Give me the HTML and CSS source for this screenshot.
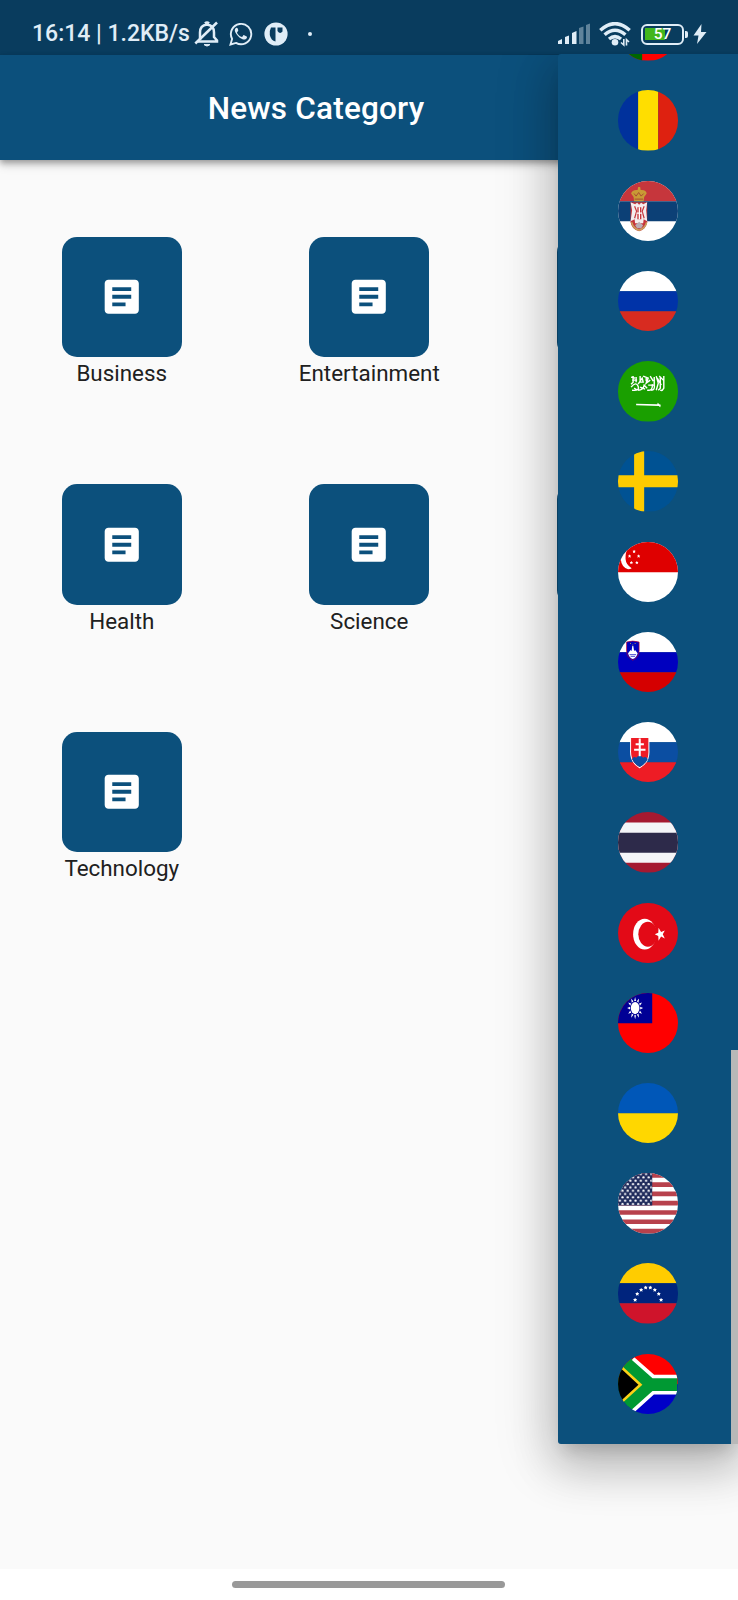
FILE: index.html
```html
<!DOCTYPE html>
<html lang="en">
<head>
<meta charset="utf-8">
<title>News Category</title>
<link rel="stylesheet" href="styles.css">
</head>
<body>
<svg class="defs" aria-hidden="true">
  <symbol id="article" viewBox="0 0 24 24"><path fill="#fff" d="M19 3H5c-1.100 0-2 .9-2 2v14c0 1.100.9 2 2 2h14c1.100 0 2-.9 2-2V5c0-1.100-.9-2-2-2zm-5 14H7v-2h7v2zm3-4H7v-2h10v2zm0-4H7V7h10v2z"/></symbol>
  <symbol id="star" viewBox="-10 -10 20 20"><path d="M0-10 3-4H9.500L5 1.500 6.500 9 0 5-6.500 9-5 1.500-9.500-4H-3Z"/></symbol>
  <pattern id="us-stars" width="5.200" height="6.600" patternUnits="userSpaceOnUse" x="0.600" y="-0.500">
    <circle cx="1.300" cy="1.600" r="1.100" fill="#fff"/><circle cx="3.900" cy="4.900" r="1.100" fill="#fff"/>
  </pattern>
</svg>

<div class="screen">
  <header class="status">
    <span class="clock">16:14 | 1.2KB/s</span>
    <svg class="bell" viewBox="0 0 26 28" fill="none" stroke="currentColor" stroke-width="2.500">
      <path d="M6 20V12.500C6 8 8.500 5 13 4.500 17.500 5 20 8 20 12.500V17L23 20.500V21.500H4"/><path d="M11 3.500Q13 1.600 15 3.500"/><path d="M1.300 23.500 23 2.500"/><path d="M10 24.600Q13 27.600 16 24.600Z" fill="currentColor" stroke-width="1"/>
    </svg>
    <svg class="whatsapp" viewBox="0 0 24 24">
      <path fill="none" stroke="currentColor" stroke-width="1.900" d="M1.500 22.500 3.100 16.900A10.200 10.200 0 1 1 7 20.900Z"/>
      <path fill="currentColor" d="M8.600 6.300c-.4-.7-.8-.7-1.200-.6-1 .4-1.700 1.500-1.600 2.900.3 2.700 4 7.300 7.700 8.700 2.200.8 4-.2 4.400-1.500.2-.8.1-1.200-.2-1.400l-2.500-1.200c-.4-.2-.7-.1-1 .3l-.9 1.200c-.3.300-.6.300-1 .1-1.900-.8-3.300-2.200-4.200-3.900-.2-.4 0-.6.200-.9l.8-1c.2-.3.2-.6.100-.9z"/>
    </svg>
    <svg class="badge" viewBox="0 0 24 24">
      <circle cx="12" cy="12" r="11.600" fill="currentColor"/>
      <path fill="#093c5e" d="M7 5.500H11.500V19.500Q7 18.500 5.800 13 5.500 8 7 5.500ZM13.500 5.500H18.500V9.500Q16 12.500 13.500 9Z"/>
    </svg>
    <span class="dot"></span>
    <svg class="signal" viewBox="0 0 32 22" fill="currentColor">
      <path d="M0 21V18L4 16V21ZM7 21V14L11 12.500V21ZM14 21V10L18.500 8V21Z"/>
      <path opacity=".4" d="M21 21V5L25.500 3.500V21ZM28 21V2L32 .5V21Z"/>
    </svg>
    <svg class="wifi" viewBox="0 0 32 25">
      <g fill="none" stroke="currentColor" stroke-width="3.500"><path d="M1.300 8.300Q16-5 30.700 8.300"/><path d="M5.600 12.800Q16 3.700 26.400 12.800"/><path d="M10 17Q16 12.200 22 17"/></g>
      <circle cx="16" cy="20.300" r="3.300" fill="currentColor"/>
      <path fill="none" stroke="currentColor" stroke-width="1.600" d="M22 20.500 24.800 23V17M30 20 27.500 17.600V23.500"/>
    </svg>
    <span class="battery"><span class="charge">57</span></span><span class="cap"></span>
    <svg class="bolt" viewBox="0 0 14 20"><path fill="currentColor" d="M8.500 0 .5 11.500H5.500L4 20 13.500 8H8Z"/></svg>
  </header>
  <div class="appbar"><h1>News Category</h1></div>
  <main class="grid">
    <div class="item"><div class="tile"><svg><use href="#article"/></svg></div><span>Business</span></div>
    <div class="item"><div class="tile"><svg><use href="#article"/></svg></div><span>Entertainment</span></div>
    <div class="item"><div class="tile"></div></div>
    <div class="item"><div class="tile"><svg><use href="#article"/></svg></div><span>Health</span></div>
    <div class="item"><div class="tile"><svg><use href="#article"/></svg></div><span>Science</span></div>
    <div class="item"><div class="tile"></div></div>
    <div class="item"><div class="tile"><svg><use href="#article"/></svg></div><span>Technology</span></div>
  </main>
  <footer class="nav"><span class="handle"></span></footer>

  <div class="drawer-clip">
  <aside class="drawer">
    <svg class="flag" viewBox="0 0 60 60"><path fill="#f00" d="M0 0H60V60H0Z"/><path fill="#060" d="M0 0H24V60H0Z"/></svg>
    <svg class="flag" viewBox="0 0 60 60"><path fill="#00319c" d="M0 0H20V60H0Z"/><path fill="#ffde00" d="M20 0H40V60H20Z"/><path fill="#de2110" d="M40 0H60V60H40Z"/></svg>
    <svg class="flag" viewBox="0 0 60 60">
      <path fill="#fff" d="M0 0H60V60H0Z"/><path fill="#c6363c" d="M0 0H60V20H0Z"/><path fill="#0c4076" d="M0 20H60V40H0Z"/>
      <path fill="#c99a35" d="M16 20 15.500 16 13 12.500Q14 8.500 19.500 9L20 6H22L22.500 9Q28 8.500 28.500 12.500L26 16 25.500 20Z"/>
      <path fill="none" stroke="#a13b31" stroke-width=".8" d="M16 12.500 18 15 20.500 11.500 23 15 25.500 12.500M16.500 18H25"/>
      <path fill="#c6363c" d="M12.500 21H29V41Q28 48 21 50 13.500 48 12.500 41Z"/>
      <path fill="#f4eeee" d="M12.500 21 17 23 19 21.500 21 23.500 23 21.500 25 23 29 21 28 29 29 40 25.500 38 25 42H17L16.500 38 12.500 40 14 29Z"/>
      <path stroke="#c6363c" stroke-width="1.200" fill="none" d="M16.500 25 18.500 30 16.500 37M26 25 24 30 26 37"/><path stroke="#c6363c" stroke-width="4" d="M21.200 26V38"/><path stroke="#fff" stroke-width="1.300" d="M21.200 26V38M18.500 32H24"/>
      <path fill="none" stroke="#c9a15c" stroke-width="1.500" d="M13.500 41Q15 47 21 49 27 47 28.500 41"/><path fill="#b9adb5" d="M17 44 21 40.500 25 44 23 47H19Z"/>
    </svg>
    <svg class="flag" viewBox="0 0 60 60"><path fill="#fff" d="M0 0H60V20H0Z"/><path fill="#0033a8" d="M0 20H60V40H0Z"/><path fill="#d82b20" d="M0 40H60V60H0Z"/></svg>
    <svg class="flag" viewBox="0 0 60 60"><path fill="#1a9f00" d="M0 0H60V60H0Z"/>
      <g fill="none" stroke="#fff" stroke-width="1.400"><path d="M13 16 17 17M15 15V21L13 23M13 26Q18 20 20 25T14 29M18 16V21M20 23 24 17 25 21 21 21M20 29Q25 29 26 24L29 27M22 26 27 28M25 15 30 17 28 22 32 19M29 29Q35 30 34 23M32 15 35 20M36 16V24Q37 29 33 29M38 15 40 22 38 29M42 16V27L40 29M45.500 15V27Q44 30 42 29M14 19 19 19M30 24H36M39 17 43 24M41 15 45 19M22 15V20M16 27 19 29M28 16V20"/></g>
      <path fill="#fff" d="M18 42.400 39 43 39.500 41.500 41 43 42.500 43.500 42 46 40.500 44.700 18 43.900Z"/></svg>
    <svg class="flag" viewBox="0 0 60 60"><path fill="#005293" d="M0 0H60V60H0Z"/><path fill="#fecb00" d="M16 0H26V60H16ZM0 24H60V36H0Z"/></svg>
    <svg class="flag" viewBox="0 0 60 60"><path fill="#fff" d="M0 0H60V60H0Z"/><path fill="#df0000" d="M0 0H60V30H0Z"/>
      <path fill="#fff" d="M9 8.200Q2.600 11 2.800 17.300 3.500 25 10 27 12.500 27 13.600 26 8 23 7.500 17 7.300 11 9 8.200Z"/>
      <g fill="#fff"><use href="#star" x="14.250" y="7.500" width="3.500" height="4"/><use href="#star" x="9.750" y="12" width="3.500" height="4"/><use href="#star" x="18.750" y="12" width="3.500" height="4"/><use href="#star" x="11.500" y="18.500" width="3.500" height="4"/><use href="#star" x="17" y="18.500" width="3.500" height="4"/></g></svg>
    <svg class="flag" viewBox="0 0 60 60"><path fill="#fff" d="M0 0H60V20H0Z"/><path fill="#0000bf" d="M0 20H60V40H0Z"/><path fill="#d50000" d="M0 40H60V60H0Z"/>
      <path fill="#0000bf" stroke="#d00020" stroke-width=".6" d="M8.500 10Q14.700 8 21 10V19Q20.500 25.500 14.700 28 9 25.500 8.500 19Z"/>
      <path fill="#fff" d="M10 21 12.500 18 13.500 19 14.200 14H15.200L16 19 17 18 19.500 21Q18.500 25.500 14.700 26.800 11 25.500 10 21Z"/><path fill="none" stroke="#0000bf" stroke-width=".7" d="M11.500 22.500H18M12.500 24.200H17"/>
      <g fill="#d9bc38"><circle cx="12.500" cy="11.500" r=".5"/><circle cx="17" cy="11.500" r=".5"/><circle cx="14.700" cy="13" r=".5"/></g></svg>
    <svg class="flag" viewBox="0 0 60 60"><path fill="#fff" d="M0 0H60V20H0Z"/><path fill="#0b4ea2" d="M0 20H60V40H0Z"/><path fill="#ee1c25" d="M0 40H60V60H0Z"/>
      <path fill="#ee1c25" stroke="#fff" stroke-width="1" d="M12.500 15.300H30.700V28Q31.500 40 21.500 45.500 11.800 40 12.500 28Z"/>
      <path fill="#0b4ea2" d="M14 37Q15.500 33.500 18 35.500 21.500 31.500 25 35.500 27.500 33.500 29.500 37 27 42 21.500 44.800 16.500 42 14 37Z"/>
      <path stroke="#fff" stroke-width="2" fill="none" d="M21.600 16.500V34M17.500 22H25.700M16 27.500H27.300"/></svg>
    <svg class="flag" viewBox="0 0 60 60"><path fill="#a51931" d="M0 0H60V60H0Z"/><path fill="#f4f5f8" d="M0 10.500H60V50.500H0Z"/><path fill="#2d2a4a" d="M0 20.500H60V40.500H0Z"/></svg>
    <svg class="flag" viewBox="0 0 60 60"><path fill="#e30a17" d="M0 0H60V60H0Z"/><ellipse cx="26.500" cy="31" rx="11.500" ry="15.300" fill="#fff"/><ellipse cx="29.700" cy="31" rx="9.500" ry="12.400" fill="#e30a17"/>
      <path fill="#fff" d="M36.500 31 40 29.500 40.300 24.500 42.800 28.800 46.500 27.200 44.500 31 46.500 35.200 42.800 33.300 40.300 37.500 40 32.700Z"/></svg>
    <svg class="flag" viewBox="0 0 60 60"><path fill="#f00" d="M0 0H60V60H0Z"/><path fill="#000095" d="M0 0H34V30H0Z"/>
      <g transform="translate(17 15) scale(.72 1)" fill="#fff"><g id="rays"><path d="M-1.300-7 0-11 1.300-7ZM-1.300 7 0 11 1.300 7ZM-7-1.300-11 0-7 1.300ZM7-1.300 11 0 7 1.300Z"/></g><use href="#rays" transform="rotate(30)"/><use href="#rays" transform="rotate(60)"/><circle r="6"/></g></svg>
    <svg class="flag" viewBox="0 0 60 60"><path fill="#0057b8" d="M0 0H60V30H0Z"/><path fill="#ffd700" d="M0 30H60V60H0Z"/></svg>
    <svg class="flag" viewBox="0 0 60 60"><path fill="#fff" d="M0 0H60V60H0Z"/><path stroke="#b7414c" stroke-width="4.620" d="M0 2.310H60M0 11.540H60M0 20.770H60M0 30H60M0 39.230H60M0 48.460H60M0 57.690H60"/><path fill="#202c5c" d="M0 0H34V32.300H0Z"/><path fill="url(#us-stars)" d="M0 0H33.500V31.800H0Z"/></svg>
    <svg class="flag" viewBox="0 0 60 60"><path fill="#fc0" d="M0 0H60V20H0Z"/><path fill="#00247d" d="M0 20H60V40H0Z"/><path fill="#cf142b" d="M0 40H60V60H0Z"/>
      <g fill="#fff"><use href="#star" x="14.900" y="34.500" width="4.200" height="4.400"/><use href="#star" x="17" y="28.500" width="4.200" height="4.400"/><use href="#star" x="20.900" y="24.500" width="4.200" height="4.400"/><use href="#star" x="25.400" y="22.300" width="4.200" height="4.400"/><use href="#star" x="30" y="22.300" width="4.200" height="4.400"/><use href="#star" x="34.500" y="24.500" width="4.200" height="4.400"/><use href="#star" x="38.400" y="28.500" width="4.200" height="4.400"/><use href="#star" x="40.700" y="34.500" width="4.200" height="4.400"/></g></svg>
    <svg class="flag" viewBox="0 0 60 60"><path fill="#f00" d="M0 0H60V30H0Z"/><path fill="#0000c8" d="M0 30H60V60H0Z"/>
      <path fill="#093" d="M-10-2 15.500 5.500 35 22.500H59V38.500H35L15.500 55-10 62Z"/>
      <path fill="none" stroke="#fff" stroke-width="3.600" d="M15 4.500 35 22.300H59M15 56.500 35 38.500H59"/>
      <path fill="#000" stroke="#fcd116" stroke-width="2.600" d="M-12-1 22.300 30.500-12 62Z"/></svg>
    <span class="scrollbar"></span>
  </aside>
  </div>
</div>
</body>
</html>
```
FILE: styles.css
```css
* { box-sizing: border-box; }
body { margin: 0; font-family: Roboto, "Liberation Sans", sans-serif; }
.defs { position: absolute; width: 0; height: 0; }
.screen { position: relative; display: flex; flex-direction: column; width: 738px; height: 1600px; overflow: hidden; background: #fafafa; }
.status { display: flex; align-items: center; flex: none; height: 54.5px; padding: 14px 31px 0 32px; background: #093c5e; color: #e0edf7; }
.status svg { flex: none; }
.clock { width: 163px; font-size: 23px; font-weight: 500; line-height: 30px; white-space: nowrap; }
.bell { width: 26px; height: 28px; margin-left: -1px; }
.whatsapp { width: 24px; height: 24px; margin-left: 9px; }
.badge { width: 24px; height: 24px; margin-left: 11px; }
.dot { width: 4px; height: 4px; margin-left: 20px; border-radius: 50%; background: currentColor; }
.signal { width: 32px; height: 22px; margin-left: auto; }
.wifi { width: 32px; height: 25px; margin-left: 9px; }
.battery { width: 43px; height: 21px; margin-left: 10px; padding: 2px; border: 2.5px solid currentColor; border-radius: 6px; }
.charge { display: block; width: 35px; height: 12px; background: linear-gradient(90deg, #43b61d 20px, transparent 20px); color: #fff; font-size: 15.5px; font-weight: 500; line-height: 13px; text-align: center; }
.cap { width: 3px; height: 7px; margin-left: 1px; border-radius: 0 2px 2px 0; background: currentColor; }
.bolt { width: 14px; height: 20px; margin-left: 5px; }
.appbar { display: flex; justify-content: center; align-items: center; position: relative; flex: none; height: 105.5px; padding: 3px 106px 0 0; background: #0c507c; box-shadow: 0 3px 6px rgba(0,0,0,.3), 0 6px 9px rgba(0,0,0,.12); }
h1 { margin: 0; color: #fff; font-size: 31.5px; font-weight: 500; letter-spacing: .2px; line-height: 40px; }
.grid { display: grid; grid-template-columns: repeat(3, 247.5px); grid-auto-rows: 247.5px; flex: 1; padding-top: 76.7px; margin-left: -2px; }
.item { display: flex; flex-direction: column; align-items: center; color: #202020; font-size: 22.4px; line-height: 32.6px; }
.tile { display: flex; align-items: center; justify-content: center; width: 120.4px; height: 120.4px; flex: none; border-radius: 15px; background: #0c507c; }
.tile svg { width: 45.5px; height: 45.5px; }
.nav { display: flex; justify-content: center; flex: none; height: 31px; padding: 12px 1px 0 0; background: #fff; }
.handle { width: 273px; height: 7px; border-radius: 4px; background: #999; }
.drawer-clip { position: absolute; top: 54px; right: 0; width: 290px; height: 1515px; overflow: hidden; display: flex; justify-content: flex-end; }
.drawer { position: relative; display: flex; flex-direction: column; align-items: center; justify-content: flex-end; gap: 29.85px; width: 180.4px; height: 1390px; padding-bottom: 29.9px; border-radius: 3px 0 0 3px; background: #0c507c; box-shadow: 0 12px 15px -7px rgba(0,0,0,.14), 0 22px 44px 4px rgba(0,0,0,.16), 0 9px 56px 10px rgba(0,0,0,.15); }
.flag { display: block; flex: none; width: 60.4px; height: 60.4px; border-radius: 50%; }
.scrollbar { position: absolute; right: 0; bottom: 0; width: 7.5px; height: 394px; background: #b8b8b8; }
```
